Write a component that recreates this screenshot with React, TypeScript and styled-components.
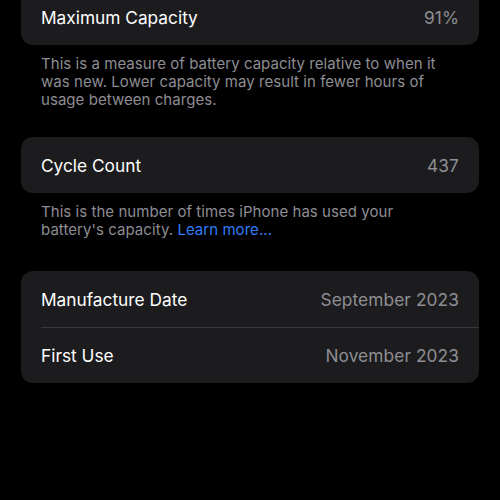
import React from 'react';
import styled, { createGlobalStyle } from 'styled-components';

const GlobalStyle = createGlobalStyle`
    html, body {
        margin: 0;
        padding: 0;
        background: #000;
    }
    body {
        font-family: Inter, "Noto Sans", "Liberation Sans", sans-serif;
        -webkit-font-smoothing: antialiased;
    }
`;

const Page = styled.div`
    width: 500px;
    height: 500px;
    overflow: hidden;
    background: #000;
    padding: 0 21px;
    box-sizing: border-box;
`;

const Section = styled.div<{ $shift?: number }>`
    margin-top: ${(p) => p.$shift ?? 32}px;
`;

const Card = styled.div`
    background: #1c1c1e;
    border-radius: 12px;
    overflow: hidden;
`;

const Row = styled.div`
    display: flex;
    align-items: center;
    justify-content: space-between;
    height: 56px;
    padding: 0 20px;

    & + & {
        border-top: 1px solid #38383a;
        margin-left: 20px;
        padding-left: 0;
        height: 55px;
    }
`;

const Label = styled.span`
    color: #fff;
    font-size: 17.3px;
`;

const Value = styled.span`
    color: #8e8e93;
    font-size: 17.3px;
    letter-spacing: 0.1px;
`;

const Footer = styled.p`
    margin: 10px 0 0;
    padding: 0 20px;
    color: #8d8d93;
    font-size: 15px;
    letter-spacing: 0.05px;
    line-height: 18px;
`;

const Link = styled.a`
    color: #2f7cf6;
    text-decoration: none;
`;

const App = () => {
    return (
        <>
            <GlobalStyle />
            <Page>
                <Section $shift={-11}>
                    <Card>
                        <Row>
                            <Label>Maximum Capacity</Label>
                            <Value>91%</Value>
                        </Row>
                    </Card>
                    <Footer>
                        This is a measure of battery capacity relative to when it was new. Lower
                        capacity may result in fewer hours of usage between charges.
                    </Footer>
                </Section>
                <Section $shift={28}>
                    <Card>
                        <Row>
                            <Label>Cycle Count</Label>
                            <Value>437</Value>
                        </Row>
                    </Card>
                    <Footer>
                        This is the number of times iPhone has used your battery's capacity.{' '}
                        <Link href="#">Learn more...</Link>
                    </Footer>
                </Section>
                <Section>
                    <Card>
                        <Row>
                            <Label>Manufacture Date</Label>
                            <Value>September 2023</Value>
                        </Row>
                        <Row>
                            <Label>First Use</Label>
                            <Value>November 2023</Value>
                        </Row>
                    </Card>
                </Section>
            </Page>
        </>
    );
};

export default App;
